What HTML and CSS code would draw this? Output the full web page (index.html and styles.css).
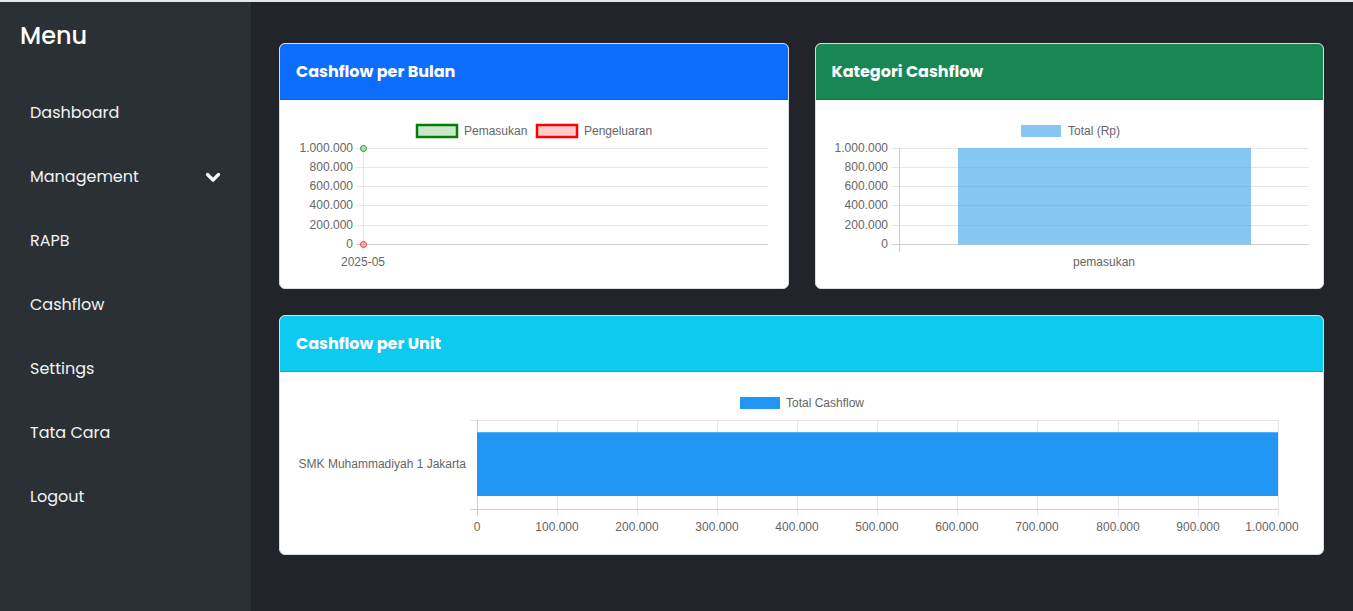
FILE: index.html
```html
<!DOCTYPE html>
<html lang="id">
<head>
<meta charset="utf-8">
<title>Dashboard</title>
<link rel="stylesheet" href="styles.css">
</head>
<body>
<div class="app">
  <aside class="sidebar">
    <h4 class="menu-title">Menu</h4>
    <ul class="nav">
      <li class="nav-item">Dashboard</li>
      <li class="nav-item">Management
        <svg class="chev" width="16" height="11" viewBox="0 0 16 11"><path d="M2.5 2.5 L8 8 L13.5 2.5" fill="none" stroke="#fff" stroke-width="3.2" stroke-linecap="round" stroke-linejoin="round"/></svg>
      </li>
      <li class="nav-item">RAPB</li>
      <li class="nav-item">Cashflow</li>
      <li class="nav-item">Settings</li>
      <li class="nav-item">Tata Cara</li>
      <li class="nav-item">Logout</li>
    </ul>
  </aside>
  <main class="main">
    <div class="grid">
      <section class="card">
        <div class="card-header bg-primary">Cashflow per Bulan</div>
        <div class="card-body">
          <svg class="chart" width="509" height="188" viewBox="0 0 509 188">
            <g class="legend">
              <rect x="137" y="25" width="40" height="12" fill="rgba(0,128,0,0.2)" stroke="#008000" stroke-width="2.5"/>
              <text x="184" y="35">Pemasukan</text>
              <rect x="257" y="25" width="40" height="12" fill="rgba(255,0,0,0.2)" stroke="#ff0000" stroke-width="2.5"/>
              <text x="304" y="35">Pengeluaran</text>
            </g>
            <g class="grid-lines">
              <line x1="76" y1="48.5" x2="488" y2="48.5"/>
              <line x1="76" y1="67.5" x2="488" y2="67.5"/>
              <line x1="76" y1="86.5" x2="488" y2="86.5"/>
              <line x1="76" y1="105.5" x2="488" y2="105.5"/>
              <line x1="76" y1="125.5" x2="488" y2="125.5"/>
              <line x1="83.5" y1="48" x2="83.5" y2="152"/>
            </g>
            <line class="axis" x1="76" y1="144.5" x2="488" y2="144.5"/>
            <g class="ylabels">
              <text x="73" y="52">1.000.000</text>
              <text x="73" y="71">800.000</text>
              <text x="73" y="90">600.000</text>
              <text x="73" y="109">400.000</text>
              <text x="73" y="129">200.000</text>
              <text x="73" y="148">0</text>
            </g>
            <circle cx="83.5" cy="48.5" r="3" fill="rgba(0,128,0,0.25)" stroke="#2e9a2e" stroke-width="1"/>
            <circle cx="83.5" cy="144.5" r="3" fill="rgba(255,0,0,0.25)" stroke="#ff3030" stroke-width="1"/>
            <text class="xlabel" x="83" y="166">2025-05</text>
          </svg>
        </div>
      </section>
      <section class="card">
        <div class="card-header bg-success">Kategori Cashflow</div>
        <div class="card-body">
          <svg class="chart" width="509" height="188" viewBox="0 0 509 188">
            <g class="legend">
              <rect x="205" y="25" width="40" height="12" fill="rgba(54,162,235,0.6)"/>
              <text x="252" y="35">Total (Rp)</text>
            </g>
            <g class="grid-lines">
              <line x1="76" y1="48.5" x2="493" y2="48.5"/>
              <line x1="76" y1="67.5" x2="493" y2="67.5"/>
              <line x1="76" y1="86.5" x2="493" y2="86.5"/>
              <line x1="76" y1="105.5" x2="493" y2="105.5"/>
              <line x1="76" y1="125.5" x2="493" y2="125.5"/>
            </g>
            <line class="axis" x1="83.5" y1="48" x2="83.5" y2="152"/>
            <line class="axis" x1="76" y1="144.5" x2="493" y2="144.5"/>
            <rect x="142" y="48" width="293" height="96.5" fill="rgba(54,162,235,0.6)"/>
            <g class="ylabels">
              <text x="72" y="52">1.000.000</text>
              <text x="72" y="71">800.000</text>
              <text x="72" y="90">600.000</text>
              <text x="72" y="109">400.000</text>
              <text x="72" y="129">200.000</text>
              <text x="72" y="148">0</text>
            </g>
            <text class="xlabel" x="288" y="166">pemasukan</text>
          </svg>
        </div>
      </section>
      <section class="card card-wide">
        <div class="card-header bg-info">Cashflow per Unit</div>
        <div class="card-body">
          <svg class="chart" width="1044" height="182" viewBox="0 0 1044 182">
            <g class="legend">
              <rect x="460" y="25" width="40" height="12" fill="#2196f3"/>
              <text x="506" y="35">Total Cashflow</text>
            </g>
            <g class="grid-lines">
              <line x1="190" y1="48.5" x2="998" y2="48.5"/>
              <line x1="277.5" y1="48" x2="277.5" y2="144"/>
              <line x1="357.5" y1="48" x2="357.5" y2="144"/>
              <line x1="437.5" y1="48" x2="437.5" y2="144"/>
              <line x1="517.5" y1="48" x2="517.5" y2="144"/>
              <line x1="597.5" y1="48" x2="597.5" y2="144"/>
              <line x1="677.5" y1="48" x2="677.5" y2="144"/>
              <line x1="757.5" y1="48" x2="757.5" y2="144"/>
              <line x1="838.5" y1="48" x2="838.5" y2="144"/>
              <line x1="918.5" y1="48" x2="918.5" y2="144"/>
              <line x1="998.5" y1="48" x2="998.5" y2="144"/>
            </g>
            <line class="axis" x1="197.5" y1="48" x2="197.5" y2="144"/>
            <line class="axis" x1="190" y1="137.5" x2="998" y2="137.5"/>
            <rect x="197" y="60" width="801" height="64" fill="#2196f3"/>
            <line x1="197" y1="60.5" x2="998" y2="60.5" stroke="#4fb0f7" stroke-width="1"/>
            <text class="ylabel-left" x="186" y="96">SMK Muhammadiyah 1 Jakarta</text>
            <g class="xlabels">
              <text x="197" y="159">0</text>
              <text x="277" y="159">100.000</text>
              <text x="357" y="159">200.000</text>
              <text x="437" y="159">300.000</text>
              <text x="517" y="159">400.000</text>
              <text x="597" y="159">500.000</text>
              <text x="677" y="159">600.000</text>
              <text x="757" y="159">700.000</text>
              <text x="838" y="159">800.000</text>
              <text x="918" y="159">900.000</text>
              <text x="992" y="159">1.000.000</text>
            </g>
          </svg>
        </div>
      </section>
    </div>
  </main>
</div>
</body>
</html>
```

FILE: styles.css
```css
html, body {
  margin: 0;
  padding: 0;
  background: #212529;
}
body {
  border-top: 2px solid #e4e6e8;
  font-family: "Poppins", "Inter", "Noto Sans", sans-serif;
}
.app {
  display: flex;
  min-height: 609px;
}
.sidebar {
  width: 251px;
  flex: 0 0 251px;
  background: #2b3035;
  box-sizing: border-box;
  padding: 18px 0 0 20px;
  color: #f8f9fa;
}
.menu-title {
  margin: 0 0 28px 0;
  font-size: 24px;
  line-height: 32px;
  font-weight: 500;
  color: #fff;
}
.nav {
  list-style: none;
  margin: 0;
  padding: 0;
}
.nav-item {
  height: 64px;
  display: flex;
  align-items: center;
  justify-content: space-between;
  padding: 0 30px 0 10px;
  font-size: 16px;
  font-weight: 400;
  color: #f1f3f5;
}
.chev {
  display: block;
  margin-top: 3px;
}
.main {
  flex: 1;
  padding: 41px 29px 0 28px;
}
.grid {
  display: grid;
  grid-template-columns: 1fr 1fr;
  gap: 26px;
}
.card {
  background: #fff;
  border: 1px solid #d9dcdf;
  border-radius: 6px;
  overflow: hidden;
}
.card-wide {
  grid-column: 1 / span 2;
}
.card-header {
  height: 55px;
  display: flex;
  align-items: center;
  padding: 0 16px;
  color: #fff;
  font-weight: 700;
  font-size: 16px;
  border-bottom: 1px solid rgba(0,0,0,0.12);
}
.bg-primary { background: #0d6efd; }
.bg-success { background: #198754; }
.bg-info { background: #0dcaf0; }
.card-body {
  display: block;
  line-height: 0;
}
.chart {
  display: block;
  font-family: "Liberation Sans", Arial, sans-serif;
  font-size: 12px;
}
.chart text {
  fill: #666;
}
.legend text {
  text-anchor: start;
}
.grid-lines line {
  stroke: #e6e6e6;
  stroke-width: 1;
}
.axis {
  stroke: #d0d0d0;
  stroke-width: 1;
}
.ylabels text {
  text-anchor: end;
}
.xlabel, .xlabels text {
  text-anchor: middle;
}
.ylabel-left {
  text-anchor: end;
}
```
